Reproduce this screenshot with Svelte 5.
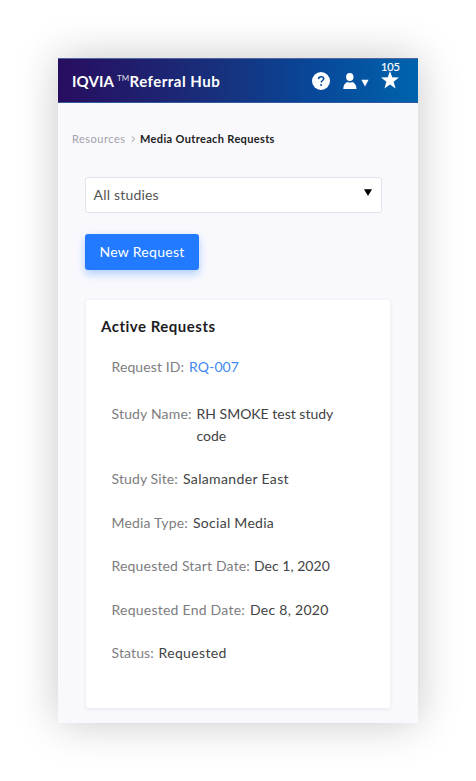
<script>
  const rows = [
    { label: 'Request ID:', value: 'RQ-007', link: true, labelWidth: 77.5, ls: 0.1, vs: 0.1 },
    { label: 'Study Name:', value: 'RH SMOKE test study code', labelWidth: 85, ls: 0.17, vs: 0 },
    { label: 'Study Site:', value: 'Salamander East', labelWidth: 71.5, ls: 0.12, vs: 0.35 },
    { label: 'Media Type:', value: 'Social Media', labelWidth: 81.5, ls: 0.17, vs: 0.28 },
    { label: 'Requested Start Date:', value: 'Dec 1, 2020', labelWidth: 142.5, ls: 0.18, vs: 0.02 },
    { label: 'Requested End Date:', value: 'Dec 8, 2020', labelWidth: 138.5, ls: 0.24, vs: 0.28 },
    { label: 'Status:', value: 'Requested', labelWidth: 47, ls: 0.12, vs: 0.35 }
  ];
</script>

<main class="stage">
  <div class="screen">
    <header>
      <h1><span class="brand">IQVIA</span><span class="tm">TM</span><span class="product">Referral Hub</span></h1>
      <svg class="help" viewBox="0 0 18 18" aria-label="Help">
        <circle cx="9" cy="9" r="9" fill="#fff" />
        <path d="M6.5 7.1C6.6 5.5 7.6 4.7 9.1 4.7C10.7 4.7 11.7 5.5 11.7 6.8C11.7 8.5 9.2 8.6 9.2 10.6" fill="none" stroke="#08489a" stroke-width="1.5" />
        <circle cx="9.1" cy="12.9" r="1" fill="#08489a" />
      </svg>
      <svg class="user" viewBox="0 0 14 17" aria-label="Account">
        <ellipse cx="6.8" cy="4" rx="3.7" ry="4" fill="#fff" />
        <path d="M0.3 16C0.3 12.2 2 10 4.3 9Q6.8 10.2 9.4 9C11.8 10 13.5 12.2 13.5 16Z" fill="#fff" />
      </svg>
      <svg class="caret" viewBox="0 0 8 8"><path d="M.4 .8H7.6L4 7.5Z" fill="#fff" /></svg>
      <div class="favorites">
        <svg viewBox="0 0 18 18" aria-label="Favorites"><path d="M9 0L11.2 6.3L18 6.5L12.6 10.7L14.6 17.5L9 13.5L3.4 17.5L5.4 10.7L0 6.5L6.8 6.3Z" fill="#fff" /></svg>
        <span>105</span>
      </div>
    </header>
    <nav>
      <span class="parent">Resources</span>
      <svg viewBox="0 0 5 8"><path d="M.7 1.2L3.6 4L.7 6.8" fill="none" stroke="#999" stroke-width="1" /></svg>
      <span class="current">Media Outreach Requests</span>
    </nav>
    <div class="select">
      <span>All studies</span>
      <svg viewBox="0 0 8 7"><path d="M0 .2H8L4 7Z" fill="#000" /></svg>
    </div>
    <button><span>New Request</span></button>
    <section>
      <h2><span>Active Requests</span></h2>
      <dl>
        {#each rows as row}
          <div class="row">
            <dt style:width="{row.labelWidth}px" style:letter-spacing="{row.ls}px"><span>{row.label}</span></dt>
            <dd class:link={row.link} style:letter-spacing="{row.vs}px"><span>{row.value}</span></dd>
          </div>
        {/each}
      </dl>
    </section>
  </div>
</main>

<style>
  :global(body) { background: #fff; }
  * { box-sizing: border-box; }
  .stage {
    width: 476px;
    height: 781px;
    padding: 58px;
    overflow: hidden;
    font-family: Lato, "Liberation Sans", sans-serif;
    font-variant-ligatures: none;
  }
  .screen {
    width: 360px;
    height: 665px;
    background: #f9f9fd;
    box-shadow: 0 0 40px rgba(0, 0, 0, 0.22);
    overflow: hidden;
  }
  header {
    height: 45px;
    padding: 0 19px 0 14px;
    display: flex;
    align-items: center;
    color: #fff;
    background: linear-gradient(90deg, #280d5f 0%, #17317d 45%, #08489a 72%, #0063ac 100%);
    border-top: 1px solid #52669c;
    border-bottom: 1px solid #305b9c;
  }
  h1 {
    margin: 0;
    width: 240px;
    display: flex;
    font-size: 15px;
    line-height: 20px;
    font-weight: 700;
    white-space: nowrap;
  }
  .brand { width: 45px; letter-spacing: 0.1px; }
  .tm { width: 12.5px; font-size: 8px; line-height: 14px; font-weight: 400; opacity: 0.85; }
  .product { letter-spacing: 0.5px; }
  svg { display: block; flex: none; }
  .help { width: 18px; height: 18px; }
  .user { width: 14px; height: 17px; margin: 1px 0 0 13px; }
  .caret { width: 8px; height: 8px; margin: 4px 0 0 4px; }
  .favorites { position: relative; margin: -2px 0 0 12px; }
  .favorites svg { width: 18px; height: 18px; }
  .favorites span {
    position: absolute;
    left: 0;
    top: -10px;
    font-size: 11px;
    line-height: 12px;
    letter-spacing: -0.1px;
    -webkit-text-stroke: 0.2px #fff;
  }
  nav {
    height: 74px;
    padding: 0 14px 2px;
    display: flex;
    align-items: center;
    font-size: 11px;
    line-height: 16px;
    white-space: nowrap;
  }
  .parent { width: 59px; color: #a2a2a7; letter-spacing: 0.5px; }
  nav svg { width: 5px; height: 8px; }
  .current { margin-left: 4px; color: #222; font-weight: 700; letter-spacing: 0.35px; }
  .select {
    width: 297px;
    height: 36px;
    margin-left: 27px;
    padding: 0 9px 2px 7.5px;
    display: flex;
    align-items: center;
    justify-content: space-between;
    border: 1px solid #e1e1e8;
    border-radius: 3px;
    background: #fff;
    color: #555;
    font-size: 14px;
    letter-spacing: 0.2px;
  }
  .select svg { width: 8px; height: 7px; margin-top: -3px; }
  button {
    display: block;
    width: 114px;
    height: 36px;
    margin: 21px 0 0 27px;
    padding: 0 0 2px;
    border: 0;
    border-radius: 3px;
    background: #217aff;
    color: #fff;
    font: 14px Lato, "Liberation Sans", sans-serif;
    letter-spacing: 0.3px;
    box-shadow: 0 4px 9px rgba(33, 122, 255, 0.35);
  }
  section {
    width: 304px;
    height: 408px;
    margin: 30px 0 0 28px;
    padding: 15px 15px;
    border-radius: 3px;
    background: #fff;
    box-shadow: 0 1px 4px rgba(50, 50, 90, 0.1);
  }
  h2 {
    margin: 0;
    font-size: 15px;
    line-height: 22px;
    font-weight: 700;
    letter-spacing: 0.5px;
    color: #1d1d1f;
  }
  dl { margin: 19.4px 0 0 10.5px; font-size: 14px; line-height: 21.7px; }
  .row { display: flex; margin-bottom: 21.7px; }
  .row:first-child { margin-bottom: 25.3px; }
  dt { flex: none; color: #7d7d80; white-space: nowrap; }
  dd { margin: 0; width: 145px; color: #424244; }
  .link { color: #4089f1; }
</style>
